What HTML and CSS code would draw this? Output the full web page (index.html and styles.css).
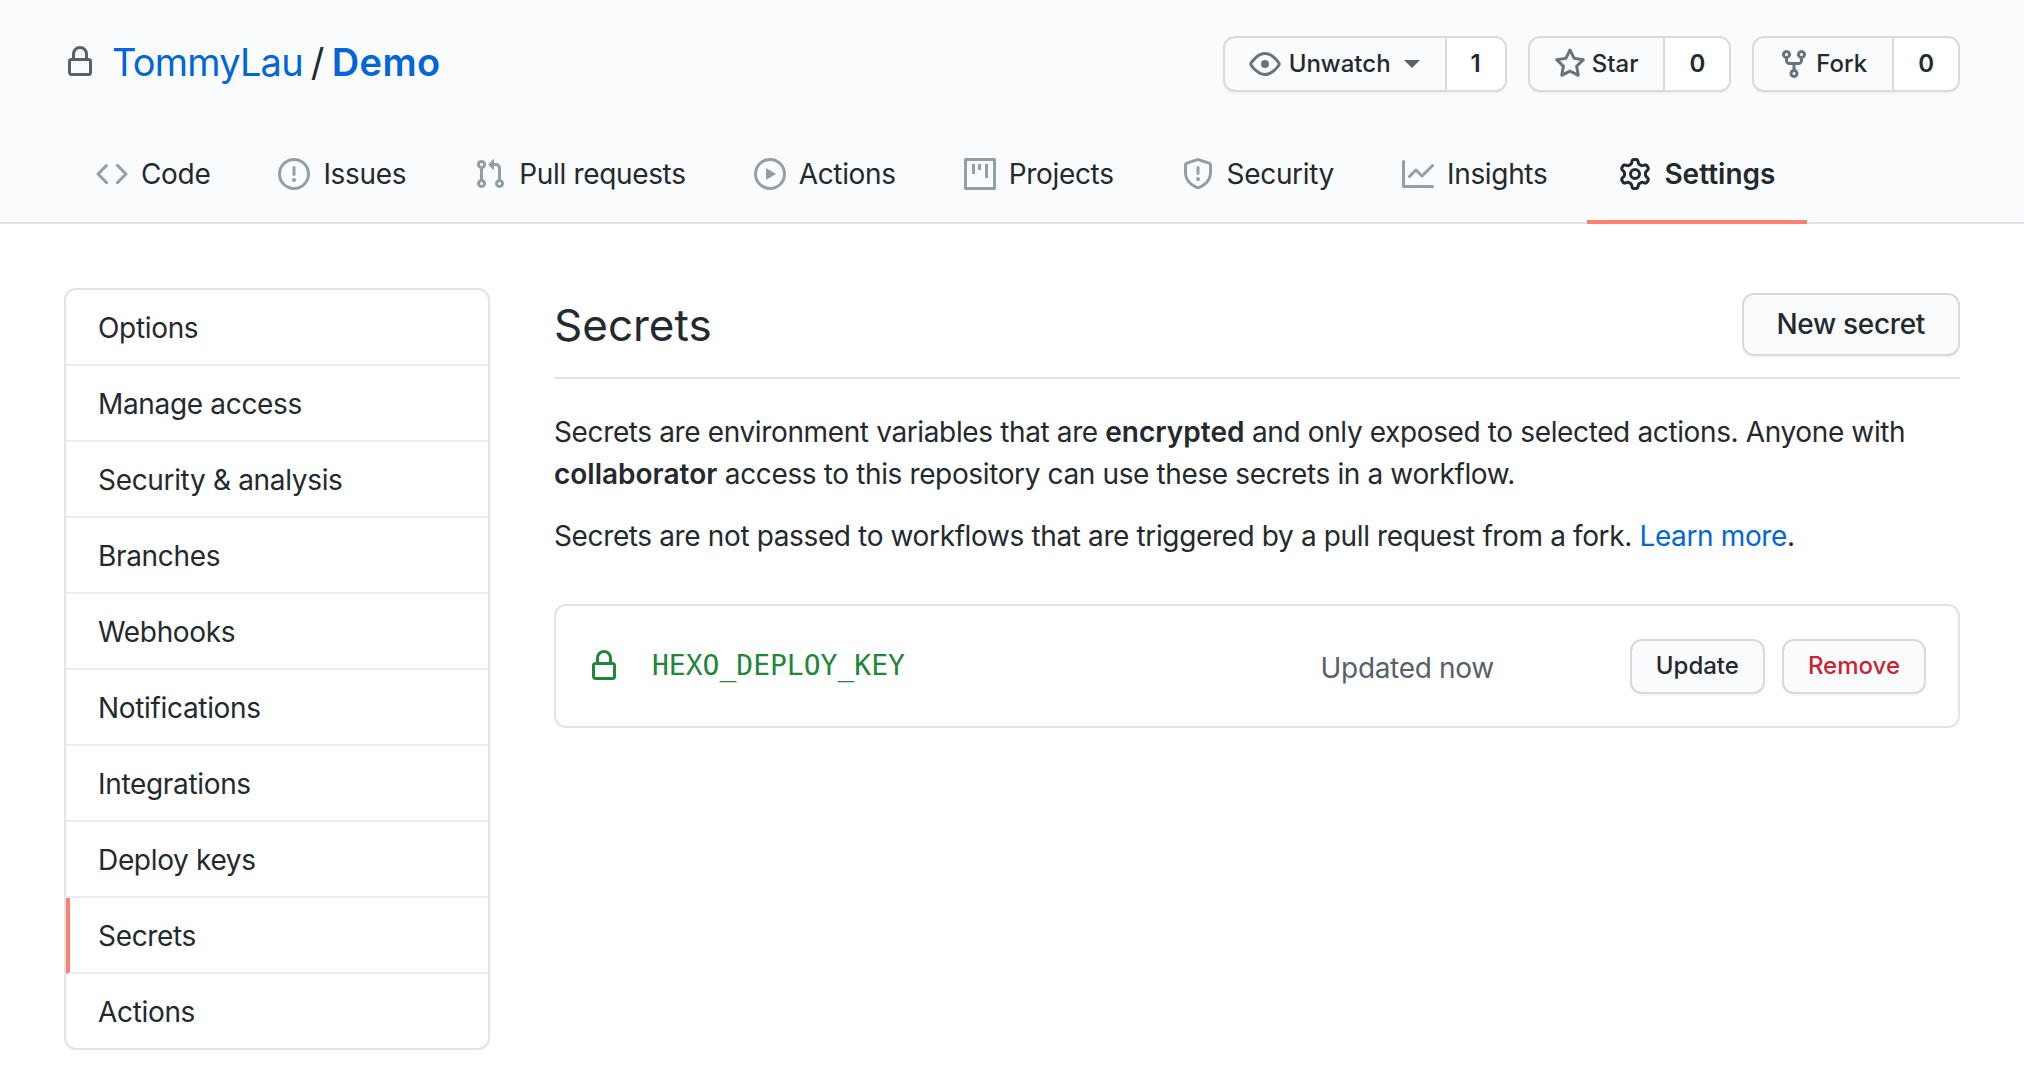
FILE: index.html
```html
<!DOCTYPE html>
<html lang="en">
<head>
    <meta charset="UTF-8">
    <title>Secrets - TommyLau/Demo</title>
    <link rel="stylesheet" href="styles.css">
</head>
<body>
    <header class="repo-head">
        <div class="repo-top">
            <h1 class="repo-title">
                <svg class="icon lock-icon" viewBox="0 0 16 16"><path fill-rule="evenodd" d="M4 4v2h-.25A1.75 1.75 0 002 7.75v5.5c0 .966.784 1.75 1.75 1.75h8.5A1.75 1.75 0 0014 13.25v-5.5A1.75 1.75 0 0012.25 6H12V4a4 4 0 10-8 0zm6.5 2V4a2.5 2.5 0 00-5 0v2h5zM12 7.5h.25a.25.25 0 01.25.25v5.5a.25.25 0 01-.25.25h-8.5a.25.25 0 01-.25-.25v-5.5a.25.25 0 01.25-.25H12z"/></svg>
                <a href="#" class="owner">TommyLau</a>
                <span class="slash">/</span>
                <a href="#" class="repo-name">Demo</a>
            </h1>
            <div class="repo-actions">
                <div class="btn-group">
                    <a href="#" class="btn-main">
                        <svg class="icon eye-icon" viewBox="0 0 16 16"><path fill-rule="evenodd" d="M1.679 7.932c.412-.621 1.242-1.75 2.366-2.717C5.175 4.242 6.527 3.5 8 3.5c1.473 0 2.824.742 3.955 1.715 1.124.967 1.954 2.096 2.366 2.717a.119.119 0 010 .136c-.412.621-1.242 1.75-2.366 2.717C10.825 11.758 9.473 12.5 8 12.5c-1.473 0-2.824-.742-3.955-1.715C2.92 9.818 2.09 8.69 1.679 8.068a.119.119 0 010-.136zM8 2c-1.981 0-3.67.992-4.933 2.078C1.797 5.169.88 6.423.43 7.1a1.619 1.619 0 000 1.798c.45.678 1.367 1.932 2.637 3.024C4.329 13.008 6.019 14 8 14c1.981 0 3.67-.992 4.933-2.078 1.27-1.091 2.187-2.345 2.637-3.023a1.619 1.619 0 000-1.798c-.45-.678-1.367-1.932-2.637-3.023C11.671 2.992 9.981 2 8 2zm0 8a2 2 0 100-4 2 2 0 000 4z"/></svg>
                        Unwatch
                        <span class="caret"></span>
                    </a>
                    <a href="#" class="btn-count">1</a>
                </div>
                <div class="btn-group">
                    <a href="#" class="btn-main">
                        <svg class="icon" viewBox="0 0 16 16"><path fill-rule="evenodd" d="M8 .25a.75.75 0 01.673.418l1.882 3.815 4.21.612a.75.75 0 01.416 1.279l-3.046 2.97.719 4.192a.75.75 0 01-1.088.791L8 12.347l-3.766 1.98a.75.75 0 01-1.088-.79l.72-4.194L.818 6.374a.75.75 0 01.416-1.28l4.21-.611L7.327.668A.75.75 0 018 .25zm0 2.445L6.615 5.5a.75.75 0 01-.564.41l-3.097.45 2.24 2.184a.75.75 0 01.216.664l-.528 3.084 2.769-1.456a.75.75 0 01.698 0l2.77 1.456-.53-3.084a.75.75 0 01.216-.664l2.24-2.183-3.096-.45a.75.75 0 01-.564-.41L8 2.694v.001z"/></svg>
                        Star
                    </a>
                    <a href="#" class="btn-count">0</a>
                </div>
                <div class="btn-group">
                    <a href="#" class="btn-main">
                        <svg class="icon" viewBox="0 0 16 16"><path fill-rule="evenodd" d="M5 3.25a.75.75 0 11-1.5 0 .75.75 0 011.5 0zm0 2.122a2.25 2.25 0 10-1.5 0v.878A2.25 2.25 0 005.75 8.5h1.5v2.128a2.251 2.251 0 101.5 0V8.5h1.5a2.25 2.25 0 002.25-2.25v-.878a2.25 2.25 0 10-1.5 0v.878a.75.75 0 01-.75.75h-4.5A.75.75 0 015 6.25v-.878zm3.75 7.378a.75.75 0 11-1.5 0 .75.75 0 011.5 0zm3-8.75a.75.75 0 100-1.5.75.75 0 000 1.5z"/></svg>
                        Fork
                    </a>
                    <a href="#" class="btn-count">0</a>
                </div>
            </div>
        </div>
        <nav class="tabs">
            <a href="#" class="tab">
                <svg class="icon" viewBox="0 0 16 16"><path fill-rule="evenodd" d="M4.72 3.22a.75.75 0 011.06 1.06L2.06 8l3.72 3.72a.75.75 0 11-1.06 1.06L.47 8.53a.75.75 0 010-1.06l4.25-4.25zm6.56 0a.75.75 0 10-1.06 1.06L13.94 8l-3.72 3.72a.75.75 0 101.06 1.06l4.25-4.25a.75.75 0 000-1.06l-4.25-4.25z"/></svg>
                Code
            </a>
            <a href="#" class="tab">
                <svg class="icon" viewBox="0 0 16 16"><path fill-rule="evenodd" d="M8 1.5a6.5 6.5 0 100 13 6.5 6.5 0 000-13zM0 8a8 8 0 1116 0A8 8 0 010 8zm9 3a1 1 0 11-2 0 1 1 0 012 0zm-.25-6.25a.75.75 0 00-1.5 0v3.5a.75.75 0 001.5 0v-3.5z"/></svg>
                Issues
            </a>
            <a href="#" class="tab">
                <svg class="icon" viewBox="0 0 16 16"><path fill-rule="evenodd" d="M7.177 3.073L9.573.677A.25.25 0 0110 .854v4.792a.25.25 0 01-.427.177L7.177 3.427a.25.25 0 010-.354zM3.75 2.5a.75.75 0 100 1.5.75.75 0 000-1.5zm-2.25.75a2.25 2.25 0 113 2.122v5.256a2.251 2.251 0 11-1.5 0V5.372A2.25 2.25 0 011.5 3.25zM11 2.5h-1V4h1a1 1 0 011 1v5.628a2.251 2.251 0 101.5 0V5A2.5 2.5 0 0011 2.5zm1 10.25a.75.75 0 111.5 0 .75.75 0 01-1.5 0zM3.75 12a.75.75 0 100 1.5.75.75 0 000-1.5z"/></svg>
                Pull requests
            </a>
            <a href="#" class="tab">
                <svg class="icon" viewBox="0 0 16 16"><path fill-rule="evenodd" d="M1.5 8a6.5 6.5 0 1113 0 6.5 6.5 0 01-13 0zM8 0a8 8 0 100 16A8 8 0 008 0zM6.379 5.227A.25.25 0 006 5.442v5.117a.25.25 0 00.379.214l4.264-2.559a.25.25 0 000-.428L6.379 5.227z"/></svg>
                Actions
            </a>
            <a href="#" class="tab">
                <svg class="icon" viewBox="0 0 16 16"><path fill-rule="evenodd" d="M.75 0A.75.75 0 000 .75v14.5c0 .414.336.75.75.75h14.5a.75.75 0 00.75-.75V.75a.75.75 0 00-.75-.75H.75zm.75 1.5h13v13h-13v-13zM4 3h1.500v5H4V3zm3 0h1.500v3H7V3zm3.500 0H12v7h-1.500V3z"/></svg>
                Projects
            </a>
            <a href="#" class="tab">
                <svg class="icon" viewBox="0 0 16 16"><path fill-rule="evenodd" d="M7.467.133a1.75 1.75 0 011.066 0l5.25 1.68A1.75 1.75 0 0115 3.48V7c0 1.566-.32 3.182-1.303 4.682-.983 1.498-2.585 2.813-5.032 3.855a1.7 1.7 0 01-1.33 0c-2.447-1.042-4.049-2.357-5.032-3.855C1.32 10.182 1 8.566 1 7V3.48a1.75 1.75 0 011.217-1.667l5.25-1.68zm.61 1.429a.25.25 0 00-.153 0l-5.25 1.68a.25.25 0 00-.174.238V7c0 1.358.275 2.666 1.057 3.86.784 1.194 2.121 2.34 4.366 3.297a.2.2 0 00.154 0c2.245-.956 3.582-2.104 4.366-3.298C13.225 9.666 13.5 8.36 13.5 7V3.48a.25.25 0 00-.174-.237l-5.25-1.68zM9 10.5a1 1 0 11-2 0 1 1 0 012 0zm-.25-5.75a.75.75 0 10-1.5 0v3a.75.75 0 001.5 0v-3z"/></svg>
                Security
            </a>
            <a href="#" class="tab">
                <svg class="icon" viewBox="0 0 16 16"><path fill-rule="evenodd" d="M1.5 1.75a.75.75 0 00-1.5 0v12.5c0 .414.336.75.75.75h14.5a.75.75 0 000-1.5H1.5V1.75zm14.28 2.53a.75.75 0 00-1.06-1.06L10 7.94 7.53 5.47a.75.75 0 00-1.06 0L3.22 8.72a.75.75 0 001.06 1.06L7 7.06l2.47 2.47a.75.75 0 001.06 0l5.25-5.25z"/></svg>
                Insights
            </a>
            <a href="#" class="tab active">
                <svg class="icon" viewBox="0 0 16 16"><path fill-rule="evenodd" d="M7.429 1.525a6.593 6.593 0 011.142 0c.036.003.108.036.137.146l.289 1.105c.147.56.55.967.997 1.189.174.086.341.183.501.29.417.278.97.423 1.53.27l1.102-.303c.11-.03.175.016.195.046.219.31.41.641.573.989.014.031.022.11-.059.19l-.815.806c-.411.406-.562.957-.53 1.456a4.588 4.588 0 010 .582c-.032.499.119 1.05.53 1.456l.815.806c.08.08.073.159.059.19a6.494 6.494 0 01-.573.99c-.02.029-.086.074-.195.045l-1.103-.303c-.559-.153-1.112-.008-1.529.27-.16.107-.327.204-.5.29-.449.222-.851.628-.998 1.189l-.289 1.105c-.029.11-.101.143-.137.146a6.613 6.613 0 01-1.142 0c-.036-.003-.108-.037-.137-.146l-.289-1.105c-.147-.56-.55-.967-.997-1.189a4.502 4.502 0 01-.501-.29c-.417-.278-.97-.423-1.53-.27l-1.102.303c-.11.03-.175-.016-.195-.046a6.492 6.492 0 01-.573-.989c-.014-.031-.022-.11.059-.19l.815-.806c.411-.406.562-.957.53-1.456a4.587 4.587 0 010-.582c.032-.499-.119-1.05-.53-1.456l-.815-.806c-.08-.08-.073-.159-.059-.19a6.44 6.44 0 01.573-.99c.02-.029.086-.075.195-.045l1.103.303c.559.153 1.112.008 1.529-.27.16-.107.327-.204.5-.29.449-.222.851-.628.998-1.189l.289-1.105c.029-.11.101-.143.137-.146zM8 0c-.236 0-.47.01-.701.03-.743.065-1.29.615-1.458 1.261l-.29 1.106c-.017.066-.078.158-.211.224a5.994 5.994 0 00-.668.386c-.123.082-.233.09-.3.071L3.27 2.776c-.644-.177-1.392.02-1.82.63a7.977 7.977 0 00-.704 1.217c-.315.675-.111 1.422.363 1.891l.815.806c.05.048.098.147.088.294a6.084 6.084 0 000 .772c.01.147-.038.246-.088.294l-.815.806c-.474.469-.678 1.216-.363 1.891.2.428.436.835.704 1.218.428.609 1.176.806 1.82.63l1.103-.303c.066-.019.176-.011.299.071.213.143.436.272.668.386.133.066.194.158.212.224l.289 1.106c.169.646.715 1.196 1.458 1.26a8.094 8.094 0 001.402 0c.743-.064 1.29-.614 1.458-1.26l.29-1.106c.017-.066.078-.158.211-.224a5.98 5.98 0 00.668-.386c.123-.082.233-.09.3-.071l1.102.302c.644.177 1.392-.02 1.82-.63.268-.382.505-.789.704-1.217.315-.675.111-1.422-.364-1.891l-.814-.806c-.05-.048-.098-.147-.088-.294a6.1 6.1 0 000-.772c-.01-.147.039-.246.088-.294l.814-.806c.475-.469.679-1.216.364-1.891a7.992 7.992 0 00-.704-1.218c-.428-.609-1.176-.806-1.82-.63l-1.103.303c-.066.019-.176.011-.299-.071a5.991 5.991 0 00-.668-.386c-.133-.066-.194-.158-.212-.224L10.16 1.29C9.99.645 9.444.095 8.701.031A8.094 8.094 0 008 0zm1.5 8a1.5 1.5 0 11-3 0 1.5 1.5 0 013 0zM11 8a3 3 0 11-6 0 3 3 0 016 0z"/></svg>
                Settings
            </a>
        </nav>
    </header>
    <div class="page">
        <nav class="side-menu">
            <a href="#" class="side-item">Options</a>
            <a href="#" class="side-item">Manage access</a>
            <a href="#" class="side-item">Security &amp; analysis</a>
            <a href="#" class="side-item">Branches</a>
            <a href="#" class="side-item">Webhooks</a>
            <a href="#" class="side-item">Notifications</a>
            <a href="#" class="side-item">Integrations</a>
            <a href="#" class="side-item">Deploy keys</a>
            <a href="#" class="side-item active">Secrets</a>
            <a href="#" class="side-item">Actions</a>
        </nav>
        <main class="content">
            <div class="content-head">
                <h2>Secrets</h2>
                <a href="#" class="btn btn-large">New secret</a>
            </div>
            <p class="intro">Secrets are environment variables that are <strong>encrypted</strong> and only exposed to selected actions. Anyone with <strong>collaborator</strong> access to this repository can use these secrets in a workflow.</p>
            <p class="intro note">Secrets are not passed to workflows that are triggered by a pull request from a fork. <a href="#">Learn more</a>.</p>
            <div class="secret-box">
                <svg class="icon secret-lock" viewBox="0 0 16 16"><path fill-rule="evenodd" d="M4 4v2h-.25A1.75 1.75 0 002 7.75v5.5c0 .966.784 1.75 1.75 1.75h8.5A1.75 1.75 0 0014 13.25v-5.5A1.75 1.75 0 0012.25 6H12V4a4 4 0 10-8 0zm6.5 2V4a2.5 2.5 0 00-5 0v2h5zM12 7.5h.25a.25.25 0 01.25.25v5.5a.25.25 0 01-.25.25h-8.5a.25.25 0 01-.25-.25v-5.5a.25.25 0 01.25-.25H12z"/></svg>
                <code class="secret-name">HEXO_DEPLOY_KEY</code>
                <span class="secret-date">Updated now</span>
                <a href="#" class="btn btn-small">Update</a>
                <a href="#" class="btn btn-small btn-danger">Remove</a>
            </div>
        </main>
    </div>
</body>
</html>
```

FILE: styles.css
```css
body {
    margin: 0;
    font-family: Inter, "Liberation Sans", sans-serif;
    font-size: 28px;
    line-height: 42px;
    letter-spacing: -0.33px;
    color: #24292e;
    background: #fff;
}
a {
    color: inherit;
    text-decoration: none;
}
.icon {
    width: 32px;
    height: 32px;
    fill: currentColor;
    flex-shrink: 0;
}
.repo-head {
    background: #fafbfc;
    border-bottom: 2px solid #e1e4e8;
    height: 222px;
}
.repo-top {
    display: flex;
    justify-content: space-between;
    align-items: flex-start;
    padding: 36px 64px 0 64px;
}
.repo-title {
    display: flex;
    align-items: center;
    margin: 0;
    font-size: 38px;
    line-height: 52px;
    font-weight: 400;
    letter-spacing: -0.8px;
}
.lock-icon {
    color: #586069;
    margin-right: 16px;
}
.owner, .repo-name {
    color: #0366d6;
}
.repo-name {
    font-weight: 600;
    letter-spacing: 0.4px;
}
.slash {
    margin: 0 8px;
}
.repo-actions {
    display: flex;
    gap: 21px;
}
.btn-group {
    display: flex;
    height: 56px;
    font-size: 24px;
    font-weight: 500;
    line-height: 52px;
    letter-spacing: 0;
    border: 2px solid rgba(27, 31, 35, 0.15);
    border-radius: 12px;
    box-sizing: border-box;
    box-shadow: 0 2px 0 rgba(27, 31, 35, 0.04);
    background: #fafbfc;
}
.btn-main {
    display: flex;
    align-items: center;
    gap: 6px;
    padding: 0 25px 0 24px;
    border-right: 2px solid rgba(27, 31, 35, 0.15);
}
.btn-main .icon {
    color: #6a737d;
}
.btn-main .eye-icon {
    margin-right: 2px;
}
.btn-count {
    padding: 0 24px;
    font-weight: 600;
    background: #fff;
    border-radius: 0 10px 10px 0;
}
.caret {
    width: 0;
    height: 0;
    margin-left: 7px;
    border: 8px solid transparent;
    border-top-color: #586069;
    border-bottom: 0;
}
.tabs {
    display: flex;
    gap: 4px;
    padding: 48px 0 0 64px;
}
.tab {
    display: flex;
    align-items: center;
    gap: 13px;
    height: 84px;
    padding: 0 32px 16px;
    box-sizing: border-box;
}
.tab .icon {
    color: #959da5;
}
.tab.active {
    font-weight: 600;
    letter-spacing: 0;
    margin-left: 4px;
    border-bottom: 4px solid #f9826c;
    padding-bottom: 12px;
}
.tab.active .icon {
    color: #24292e;
}
.page {
    display: flex;
    gap: 64px;
    padding: 64px 64px 0 64px;
}
.side-menu {
    width: 426px;
    flex-shrink: 0;
    box-sizing: border-box;
    border: 2px solid #e1e4e8;
    border-radius: 12px;
    align-self: flex-start;
    overflow: hidden;
}
.side-item {
    display: block;
    height: 76px;
    box-sizing: border-box;
    padding: 17px 32px 15px;
    border-bottom: 2px solid #eaecef;
}
.side-item:last-child {
    border-bottom: 0;
    height: 74px;
}
.side-item.active {
    border-left: 4px solid #f9826c;
    padding-left: 28px;
}
.content {
    flex: 1;
}
.content-head {
    display: flex;
    justify-content: space-between;
    align-items: flex-start;
    height: 89px;
    border-bottom: 2px solid #e1e4e8;
    margin-bottom: 32px;
}
.content-head h2 {
    margin: 7px 0 0;
    font-size: 44px;
    line-height: 60px;
    font-weight: 400;
    letter-spacing: 0;
}
.intro {
    margin: 0 0 20px;
    width: 1400px;
    letter-spacing: -0.37px;
}
.intro a {
    color: #0366d6;
}
.intro strong {
    font-weight: 600;
    letter-spacing: 0;
}
.note {
    margin-bottom: 47px;
}
.btn {
    display: block;
    box-sizing: border-box;
    border: 2px solid rgba(27, 31, 35, 0.15);
    border-radius: 12px;
    background: #fafbfc;
    box-shadow: 0 2px 0 rgba(27, 31, 35, 0.04);
    font-weight: 500;
}
.btn-large {
    padding: 8px 33px;
    height: 63px;
    margin-top: 5px;
}
.btn-small {
    font-size: 24px;
    line-height: 50px;
    height: 55px;
    padding: 0 24px;
    letter-spacing: 0;
}
.btn-danger {
    color: #cb2431;
    margin-left: 17px;
}
.secret-box {
    display: flex;
    align-items: center;
    height: 124px;
    box-sizing: border-box;
    padding: 0 32px;
    border: 2px solid #e1e4e8;
    border-radius: 12px;
}
.secret-lock {
    color: #22863a;
    margin-right: 32px;
}
.secret-name {
    font-family: "DejaVu Sans Mono", monospace;
    font-size: 28px;
    letter-spacing: 0;
    color: #22863a;
}
.secret-date {
    margin-left: auto;
    margin-right: 136px;
    padding-top: 4px;
    color: #586069;
}
```
